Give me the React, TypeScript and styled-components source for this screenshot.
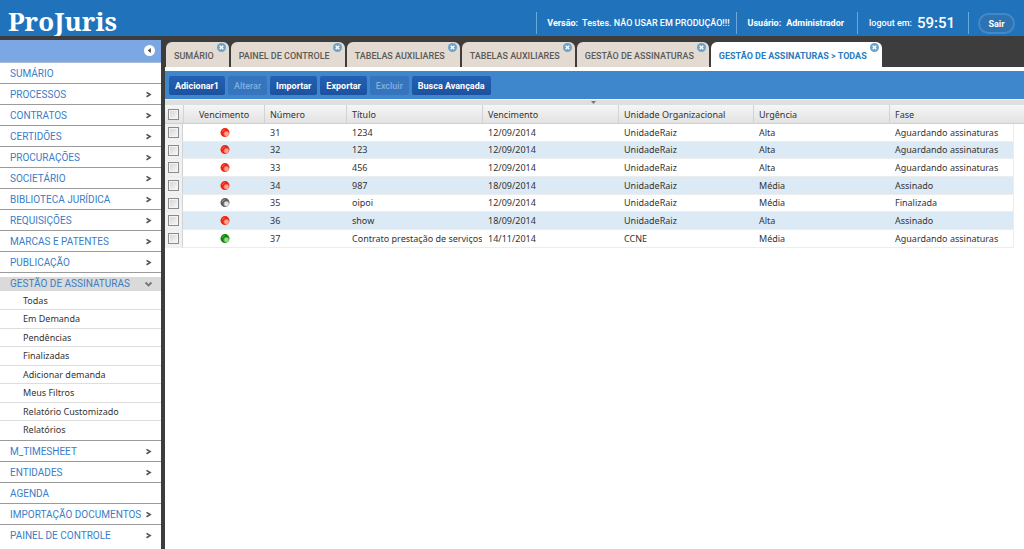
import React from "react";
import styled, { createGlobalStyle, css } from "styled-components";

const Global = createGlobalStyle`
  * { box-sizing: border-box; }
  html, body, #root { height: 100%; margin: 0; }
  body { background: #fff; color: #333; font: 9px/12px "Noto Sans", "Open Sans", sans-serif; }
  button, input { font: inherit; margin: 0; }
`;

const display = `"Roboto", "Noto Sans", sans-serif`;

const Page = styled.div`
  min-height: 100%;
  display: flex;
  flex-direction: column;
`;

const Header = styled.header`
  height: 36px;
  background: #2073bb;
  display: flex;
  justify-content: space-between;
  color: #fff;
`;

const Logo = styled.h1`
  margin: 0;
  padding: 6px 0 0 8px;
  font: 700 26px/30px "Noto Serif", "DejaVu Serif", serif;
`;

const Session = styled.div`
  display: flex;
  padding: 12px 9px 0 0;
  font: 700 9px/23px ${display};
`;

const SessionItem = styled.div<{ $tight?: boolean }>`
  height: 22px;
  border-left: 1px solid #6ba9dc;
  padding: 0 ${(p) => (p.$tight ? 6 : 13)}px 0 ${(p) => (p.$tight ? 10 : 11)}px;
  display: flex;
  gap: ${(p) => (p.$tight ? 4 : 5)}px;
  white-space: nowrap;
`;

const Light = styled.span`
  font-weight: 500;
`;

const Clock = styled.span`
  font-size: 15px;
  font-weight: 500;
`;

const ExitSlot = styled.div`
  border-left: 1px solid #6ba9dc;
  padding-left: 9px;
  height: 22px;
`;

const ExitButton = styled.button`
  height: 21px;
  width: 37px;
  margin-top: 1px;
  padding: 0;
  display: block;
  border: 2px solid #4189c8;
  border-radius: 11px;
  background: #2f72b0;
  color: #fff;
  line-height: 18px;
  font-weight: 700;
`;

const Body = styled.div`
  flex: 1;
  display: flex;
  background: #3d3d3d;
`;

const Sidebar = styled.aside`
  flex: none;
  width: 161px;
  margin: 4px 4px 0 0;
  background: #fff;
`;

const SideTop = styled.div`
  height: 23px;
  background: #7ba7e4;
  border-bottom: 1px solid #a9bcd8;
  display: flex;
  align-items: center;
  justify-content: flex-end;
  padding: 0 6px 2px 0;
`;

const CollapseButton = styled.button`
  width: 11px;
  height: 11px;
  padding: 0;
  border: 0;
  border-radius: 50%;
  background: #fff;
  display: flex;
`;

const MenuList = styled.ul`
  list-style: none;
  margin: 0;
  padding: 0;
`;

const MenuItem = styled.li`
  & + & { border-top: 1px solid #9b9b9b; }
`;

const MenuLink = styled.a<{ $open?: boolean }>`
  height: 20px;
  padding: 2px 8px 0 10px;
  display: flex;
  align-items: center;
  justify-content: space-between;
  color: #3a7dc6;
  font: 10px/18px ${display};
  text-decoration: none;
  white-space: nowrap;
  ${(p) => p.$open && css`
    height: 14px;
    margin-top: 4px;
    padding-top: 0;
    line-height: 14px;
    background: #dadada;
  `}
`;

const SubList = styled(MenuList)`
  padding-top: 1px;
`;

const SubItem = styled.li`
  height: 18px;
  border-bottom: 1px solid #dedede;
  &:nth-child(even) { height: 19px; }
  &:last-child { border-bottom: 0; }
`;

const SubLink = styled.a`
  display: block;
  padding-left: 23px;
  line-height: 18px;
  color: #333;
  text-decoration: none;
`;

const Main = styled.main`
  flex: 1;
  min-width: 0;
  display: flex;
  flex-direction: column;
`;

const Tabs = styled.nav`
  height: 31px;
  padding: 6px 0 0 1px;
  display: flex;
  gap: 2px;
`;

const Tab = styled.div<{ $active?: boolean }>`
  height: 25px;
  display: flex;
  border-radius: 6px 6px 0 0;
  background: ${(p) => (p.$active ? "#fff" : "#e3dbd2")};
  a {
    height: 25px;
    padding: 0 3px 0 8px;
    line-height: 28px;
    font-family: ${display};
    font-weight: ${(p) => (p.$active ? 700 : 500)};
    color: ${(p) => (p.$active ? "#2b7cc0" : "#5c5a57")};
    text-decoration: none;
    white-space: nowrap;
  }
`;

const TabClose = styled.button`
  width: 9px;
  height: 9px;
  margin: 1px 3px 0 0;
  padding: 0;
  border: 0;
  border-radius: 50%;
  background: #69a3cb;
  display: flex;
`;

const Toolbar = styled.div`
  height: 32px;
  border-top: 4px solid #fff;
  background: #3f87cd;
  padding: 5px 4px 0;
  display: flex;
  gap: 3px;
`;

const ToolButton = styled.button`
  height: 19px;
  padding: 0 6px;
  border: 0;
  border-radius: 2px;
  background: linear-gradient(#2461b4, #1b529f);
  color: #fff;
  font: 700 9px/18px ${display};
  white-space: nowrap;
  &:disabled {
    background: #3674bd;
    color: #83afdf;
    font-weight: 500;
  }
`;

const Splitter = styled.div`
  height: 6px;
  border-top: 1px solid #eaf4fb;
  background: #dfdfdf;
  display: flex;
  justify-content: center;
  svg { margin: 1px 2px 0 0; }
`;

const Content = styled.section`
  flex: 1;
  background: #fff;
`;

const Grid = styled.table`
  width: 100%;
  table-layout: fixed;
  border-collapse: separate;
  border-spacing: 0;
  th, td {
    padding: 0 0 0 5px;
    text-align: left;
    font-weight: 400;
    white-space: nowrap;
    overflow: hidden;
  }
`;

const Col = styled.col<{ $w?: number }>`
  width: ${(p) => (p.$w ? `${p.$w}px` : "auto")};
`;

const Head = styled.thead`
  th {
    height: 19px;
    padding-top: 2px;
    background: linear-gradient(#f6f6f6, #e2e2e2);
    border-bottom: 1px solid #d0d0d0;
    border-left: 1px solid #d3d3d3;
  }
  th:first-child, th:last-child { border-left: 0; }
`;

const CenterHead = styled.th`
  &&& { text-align: center; padding: 2px 0 0; }
`;

const Row = styled.tr`
  height: 18px;
  &:nth-child(3n + 2) { height: 17px; }
  td { border-bottom: 1px solid #ededed; padding-left: 6px; }
  &:nth-child(even) td { background: #dceaf5; }
  td:nth-last-child(2) { border-right: 1px solid #ededed; }
  td:last-child, &:nth-child(even) td:last-child { background: #fff; border-bottom: 0; }
`;

const CheckCell = styled.td`
  &&&& { background: #f1f1f1; padding: 0 0 0 3px; border-right: 1px solid #d3d3d3; }
`;

const CheckHead = styled.th`
  &&& { padding: 0 0 0 3px; }
`;

const Check = styled.input.attrs({ type: "checkbox" })`
  appearance: none;
  display: block;
  width: 11px;
  height: 11px;
  border: 1px solid #8b8b8b;
  background: linear-gradient(135deg, #d2d2d2, #fafafa);
  box-shadow: inset 0 0 0 1px #f4f4f4;
`;

const Dot = styled.svg`
  display: block;
  margin: 0 auto;
`;

const DotCell = styled.td`
  &&& { padding: 0 0 0 2px; }
`;

const MENU_TOP = ["SUMÁRIO", "PROCESSOS", "CONTRATOS", "CERTIDÕES", "PROCURAÇÕES", "SOCIETÁRIO", "BIBLIOTECA JURÍDICA", "REQUISIÇÕES", "MARCAS E PATENTES", "PUBLICAÇÃO"];
const SUBMENU = ["Todas", "Em Demanda", "Pendências", "Finalizadas", "Adicionar demanda", "Meus Filtros", "Relatório Customizado", "Relatórios"];
const MENU_BOTTOM = ["M_TIMESHEET", "ENTIDADES", "AGENDA", "IMPORTAÇÃO DOCUMENTOS", "PAINEL DE CONTROLE"];
const LEAVES = ["SUMÁRIO", "AGENDA"];
const TABS = ["SUMÁRIO", "PAINEL DE CONTROLE", "TABELAS AUXILIARES", "TABELAS AUXILIARES", "GESTÃO DE ASSINATURAS", "GESTÃO DE ASSINATURAS > TODAS"];
const ACTIONS: [string, boolean][] = [["Adicionar1", true], ["Alterar", false], ["Importar", true], ["Exportar", true], ["Excluir", false], ["Busca Avançada", true]];

type Status = "late" | "closed" | "onTime";
const STATUS: Record<Status, { base: string; shine: string; label: string }> = {
  late: { base: "#ee2411", shine: "#ffa596", label: "Vencido" },
  closed: { base: "#5c5c5c", shine: "#e6e6e6", label: "Encerrado" },
  onTime: { base: "#12850f", shine: "#8fe084", label: "No prazo" },
};
const ROWS: [Status, string[]][] = [
  ["late", ["31", "1234", "12/09/2014", "UnidadeRaiz", "Alta", "Aguardando assinaturas"]],
  ["late", ["32", "123", "12/09/2014", "UnidadeRaiz", "Alta", "Aguardando assinaturas"]],
  ["late", ["33", "456", "12/09/2014", "UnidadeRaiz", "Alta", "Aguardando assinaturas"]],
  ["late", ["34", "987", "18/09/2014", "UnidadeRaiz", "Média", "Assinado"]],
  ["closed", ["35", "oipoi", "12/09/2014", "UnidadeRaiz", "Média", "Finalizada"]],
  ["late", ["36", "show", "18/09/2014", "UnidadeRaiz", "Alta", "Assinado"]],
  ["onTime", ["37", "Contrato prestação de serviços", "14/11/2014", "CCNE", "Média", "Aguardando assinaturas"]],
];

const Chevron = ({ down }: { down?: boolean }) => (
  <svg width="9" height="8" viewBox="0 0 9 8" fill="none" stroke={down ? "#777" : "#555"} strokeWidth={down ? 1.9 : 1.6} aria-hidden="true">
    <path d={down ? "M1.5 2.5 4.5 5.5 7.5 2.5" : "M2.5 1.4 6.1 3.6 2.5 5.8"} />
  </svg>
);

const StatusDot = ({ status }: { status: Status }) => {
  const s = STATUS[status];
  return (
    <Dot width="10" height="10" viewBox="0 0 10 10" role="img" aria-label={s.label}>
      <defs>
        <radialGradient id={`shine-${status}`} cx="0.66" cy="0.64" r="0.5">
          <stop offset="0" stopColor={s.shine} />
          <stop offset="0.35" stopColor={s.shine} />
          <stop offset="0.75" stopColor={s.base} />
        </radialGradient>
      </defs>
      <circle cx="5" cy="4.6" r="4.5" fill={`url(#shine-${status})`} />
      <path d="M2.2 4A3 3 0 0 1 4.8 1.6" stroke={s.shine} strokeWidth="0.8" fill="none" opacity="0.6" />
    </Dot>
  );
};

const Entry = ({ label }: { label: string }) => (
  <MenuItem>
    <MenuLink href="#">
      {label}
      {!LEAVES.includes(label) && <Chevron />}
    </MenuLink>
  </MenuItem>
);

export default function App() {
  return (
    <Page>
      <Global />
      <Header>
        <Logo>ProJuris</Logo>
        <Session>
          <SessionItem $tight><span>Versão:</span><Light>Testes. NÃO USAR EM PRODUÇÃO!!!</Light></SessionItem>
          <SessionItem><span>Usuário:</span><span>Administrador</span></SessionItem>
          <SessionItem><Light>logout em:</Light><Clock>59:51</Clock></SessionItem>
          <ExitSlot><ExitButton>Sair</ExitButton></ExitSlot>
        </Session>
      </Header>
      <Body>
        <Sidebar>
          <SideTop>
            <CollapseButton aria-label="Recolher menu">
              <svg width="11" height="11" viewBox="0 0 11 11" aria-hidden="true"><path d="M6.8 3v5L3.8 5.5z" fill="#444" /></svg>
            </CollapseButton>
          </SideTop>
          <MenuList>
            {MENU_TOP.map((m) => <Entry key={m} label={m} />)}
            <MenuItem>
              <MenuLink href="#" $open>GESTÃO DE ASSINATURAS<Chevron down /></MenuLink>
              <SubList>
                {SUBMENU.map((s) => <SubItem key={s}><SubLink href="#">{s}</SubLink></SubItem>)}
              </SubList>
            </MenuItem>
            {MENU_BOTTOM.map((m) => <Entry key={m} label={m} />)}
          </MenuList>
        </Sidebar>
        <Main>
          <Tabs>
            {TABS.map((t, i) => (
              <Tab key={i} $active={i === TABS.length - 1}>
                <a href="#">{t}</a>
                <TabClose aria-label={`Fechar ${t}`}>
                  <svg width="9" height="9" viewBox="0 0 9 9" stroke="#fff" strokeWidth="1.4" aria-hidden="true"><path d="M2.7 2.7l3.6 3.6M6.3 2.7L2.7 6.3" /></svg>
                </TabClose>
              </Tab>
            ))}
          </Tabs>
          <Toolbar>
            {ACTIONS.map(([label, on]) => <ToolButton key={label} disabled={!on}>{label}</ToolButton>)}
          </Toolbar>
          <Splitter>
            <svg width="5" height="3" viewBox="0 0 5 3" aria-hidden="true"><path d="M0 0h5L2.5 3z" fill="#777" /></svg>
          </Splitter>
          <Content>
            <Grid>
              <colgroup>
                <Col $w={18} /><Col $w={81} /><Col $w={82} /><Col $w={136} /><Col $w={136} /><Col $w={135} /><Col $w={136} /><Col /><Col $w={10} />
              </colgroup>
              <Head>
                <tr>
                  <CheckHead><Check aria-label="Selecionar todos" /></CheckHead>
                  <CenterHead>Vencimento</CenterHead>
                  {["Número", "Título", "Vencimento", "Unidade Organizacional", "Urgência", "Fase"].map((h) => <th key={h}>{h}</th>)}
                  <th />
                </tr>
              </Head>
              <tbody>
                {ROWS.map(([status, cells]) => (
                  <Row key={cells[0]}>
                    <CheckCell><Check aria-label={`Selecionar ${cells[0]}`} /></CheckCell>
                    <DotCell><StatusDot status={status} /></DotCell>
                    {cells.map((c, i) => <td key={i}>{c}</td>)}
                    <td />
                  </Row>
                ))}
              </tbody>
            </Grid>
          </Content>
        </Main>
      </Body>
    </Page>
  );
}
